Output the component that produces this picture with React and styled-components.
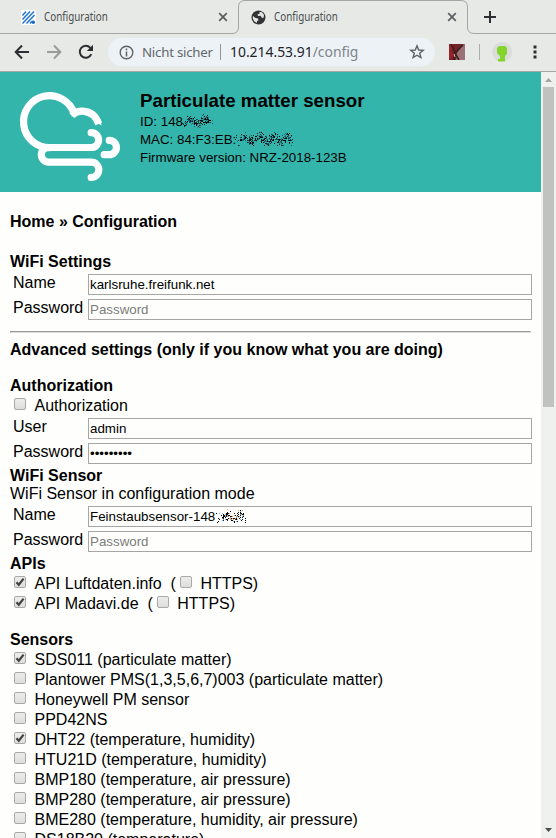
import React from 'react';
import styled, { createGlobalStyle } from 'styled-components';

const Global = createGlobalStyle`
  * { box-sizing: border-box; }
  html, body { margin: 0; height: 100%; overflow: hidden; background: #fefffc; }
`;

const Window = styled.div`
  width: 556px;
  height: 838px;
  display: flex;
  flex-direction: column;
  overflow: hidden;
  background: #fefffc;
  font-family: "Liberation Sans", Arial, sans-serif;
  font-size: 16px;
  line-height: 18px;
  color: #000;
`;

const TabStrip = styled.div`
  height: 34px;
  flex: none;
  display: flex;
  background: #e7e9e6;
  font-family: "Noto Sans", sans-serif;
  font-size: 12px;
  color: #4b4f50;
`;

const Tab = styled.div`
  position: relative;
  width: ${(p) => p.$width}px;
  height: 34px;
  padding: 0 0 0 ${(p) => p.$inset}px;
  display: flex;
  align-items: center;
  flex: none;
`;

const TabEdge = styled.svg`
  position: absolute;
  left: 0;
  top: 0;
`;

const TabTitle = styled.span`
  width: ${(p) => p.$width}px;
  margin-left: 8px;
  white-space: nowrap;
  span {
    display: inline-block;
    transform: scaleX(0.82);
    transform-origin: 0 50%;
  }
`;

const Toolbar = styled.div`
  height: 38px;
  flex: none;
  display: flex;
  align-items: center;
  padding: 0 0 1px 14px;
  background: #e7e9e6;
  border-bottom: 1px solid #a5a6a3;
`;

const Icon = styled.svg`
  flex: none;
  display: block;
  margin-left: ${(p) => p.$gap || 0}px;
`;

const AddressBar = styled.div`
  width: 327px;
  height: 28px;
  margin-left: 14px;
  padding-left: 11px;
  border-radius: 14px;
  background: #edf2f6;
  display: flex;
  align-items: center;
  font-family: "Noto Sans", sans-serif;
  font-size: 13.3px;
  color: #63676b;
  white-space: nowrap;
`;

const Security = styled.span`
  width: 79px;
  height: 16px;
  line-height: 16px;
  margin-left: 8px;
  border-right: 1px solid #8f9496;
  letter-spacing: -0.25px;
`;

const Url = styled.span`
  width: 179px;
  margin-left: 9px;
  color: #202427;
  font-size: 13.9px;
  i { font-style: normal; color: #808589; }
`;

const Divider = styled.div`
  width: 1px;
  height: 16px;
  margin-left: 14px;
  background: #acaeab;
`;

const Avatar = styled.div`
  width: 20px;
  height: 20px;
  margin-left: 12px;
  border-radius: 50%;
  background: #d9dcda;
`;

const Viewport = styled.div`
  flex: 1;
  min-height: 0;
  display: flex;
`;

const Page = styled.main`
  flex: 1;
  min-width: 0;
  overflow: hidden;
`;

const Banner = styled.header`
  height: 120px;
  display: flex;
  background: #34b5ac;
`;

const BannerText = styled.div`
  padding-top: 19px;
  margin-left: 18px;
  font-size: 13.33px;
  white-space: nowrap;
`;

const BannerTitle = styled.h3`
  margin: 0 0 2px;
  font-size: 18.72px;
  line-height: 20px;
`;

const Content = styled.div`
  padding: 21px 9px 0 10px;
  white-space: nowrap;
`;

const Heading = styled.h4`
  margin: 0;
  padding: ${(p) => p.$before || 0}px 0 ${(p) => p.$after || 0}px;
  font-size: 16px;
  font-weight: bold;
`;

const Rule = styled.hr`
  height: 2px;
  margin: 8px 1px 8px 0;
  border: 1px solid #dcdddb;
  border-top-color: #999a98;
  border-left-color: #999a98;
`;

const Fields = styled.div`
  display: grid;
  grid-template-columns: 75px 444px;
  row-gap: 4px;
  padding: 3px 0 3px 3px;
`;

const Label = styled.label`
  height: 21px;
`;

const InputBox = styled.div`
  position: relative;
  height: 21px;
`;

const Input = styled.input`
  display: block;
  width: 444px;
  height: 21px;
  padding: 1px;
  border: 1px solid #a6a7a5;
  border-radius: 0;
  outline: none;
  background: #fefffc;
  color: #000;
  font: 13.33px "Liberation Sans", Arial, sans-serif;
  &::placeholder { color: #7b7c7a; opacity: 1; }
`;

const Option = styled.div`
  height: 20px;
  padding: 2px 0 0 4px;
  display: flex;
`;

const Mark = styled.svg`
  flex: none;
  display: block;
  width: 12px;
  height: 12px;
  margin: 1px 8.5px 0 ${(p) => p.$gap || 0}px;
`;

const InlineScribble = styled.svg`
  display: inline-block;
  height: 16px;
  vertical-align: top;
  margin-left: ${(p) => p.$gap || 0}px;
`;

const InputScribble = styled.svg`
  position: absolute;
  left: 128px;
  top: 2px;
`;

const ScrollBar = styled.div`
  width: 15px;
  flex: none;
  display: flex;
  flex-direction: column;
  align-items: center;
  background: #eff1ee;
`;

const ScrollThumb = styled.div`
  width: 11px;
  height: 320px;
  margin: 0 0 auto;
  background: #c0c2bf;
`;

function specks(width, seed, colors) {
  let s = seed;
  const rnd = () => {
    s = (s * 16807) % 2147483647;
    return s / 2147483647;
  };
  const out = [];
  for (let x = 0; x < width; x++) {
    const middle = 8 + 2.5 * Math.sin(x / 2.2);
    for (let y = 1; y < 15; y++) {
      const edge = Math.min(1, (x + 1) / 10, (width - x) / 5);
      const spread = Math.max(0, 1 - Math.abs(y - middle) / 7);
      if (rnd() < 0.66 * edge * spread) {
        out.push(<rect key={x + '-' + y} x={x} y={y} width="1" height="1" fill={colors[Math.floor(rnd() * colors.length)]} />);
      }
    }
  }
  return out;
}

const DARK = ['#071d1c', '#0b2827', '#1c4f78', '#247d78', '#000'];
const MIXED = ['#000', '#111', '#222', '#dfa56a', '#74bce8', '#000'];

const Close = () => (
  <Icon width="10" height="10">
    <path d="M1.2 1.2 8.8 8.8M8.8 1.2 1.2 8.8" stroke="#5a5e60" strokeWidth="1.7" />
  </Icon>
);

function Checkbox({ on, gap }) {
  return (
    <Mark $gap={gap} viewBox="0 0 12 12">
      <defs>
        <linearGradient id="face" x2="0" y2="1">
          <stop offset="0" stopColor="#ededeb" />
          <stop offset="1" stopColor="#dddedc" />
        </linearGradient>
      </defs>
      <rect x=".5" y=".5" width="11" height="11" rx="1.5" fill="url(#face)" stroke="#a9aaa8" />
      {on && <path d="M2.5 6.2 4.8 8.7 9.6 2.6" fill="none" stroke="#424341" strokeWidth="2.2" />}
    </Mark>
  );
}

function Field({ label, value, placeholder, type = 'text', scribble }) {
  return (
    <>
      <Label>{label}</Label>
      <InputBox>
        <Input type={type} defaultValue={value} placeholder={placeholder} />
        {scribble && (
          <InputScribble width="31" height="17" shapeRendering="crispEdges">{specks(30, 77, MIXED)}</InputScribble>
        )}
      </InputBox>
    </>
  );
}

const sensors = [
  ['SDS011 (particulate matter)', true],
  ['Plantower PMS(1,3,5,6,7)003 (particulate matter)'],
  ['Honeywell PM sensor'],
  ['PPD42NS'],
  ['DHT22 (temperature, humidity)', true],
  ['HTU21D (temperature, humidity)'],
  ['BMP180 (temperature, air pressure)'],
  ['BMP280 (temperature, air pressure)'],
  ['BME280 (temperature, humidity, air pressure)'],
  ['DS18B20 (temperature)'],
];

const apis = ['API Luftdaten.info', 'API Madavi.de'];

export default function App() {
  return (
    <Window>
      <Global />
      <TabStrip>
        <Tab $width={238} $inset={21}>
          <TabEdge width="238" height="34">
            <path d="M0 33.5H232Q238.5 33.5 238.5 27" fill="none" stroke="#a5a6a3" />
          </TabEdge>
          <Icon width="15" height="15" viewBox="0 0 15 15">
            <rect width="15" height="15" rx="2" fill="#fbfcfc" />
            <path d="M1.5 5.5 5 1.5M1.5 9.5 9 1.5M1.5 13.5 13 1.5M5.5 13.5 13.5 5M9 13.5 11 11.2" stroke="#2376cf" strokeWidth="1.5" />
            <circle cx="12.3" cy="12.2" r="1.7" fill="#1469c4" />
          </Icon>
          <TabTitle $width={174}><span>Configuration</span></TabTitle>
          <Close />
        </Tab>
        <Tab $width={318} $inset={13}>
          <TabEdge width="318" height="34">
            <path d="M.5 28V7Q.5.5 7 .5H223Q229.500 .5 229.500 7V27Q229.500 33.500 236 33.500H318" fill="none" stroke="#a5a6a3" />
            <path d="M-6 33.500Q.5 33.500 .5 27" fill="none" stroke="#a5a6a3" />
          </TabEdge>
          <Icon width="15" height="15" viewBox="0 0 15 15">
            <circle cx="7.500" cy="7.500" r="7" fill="#303435" />
            <path d="M8.500 2 11 2.300 13 5 12.500 8 10.500 7.500 9.800 5.800 7 6 6.500 4.500 8.500 3.800ZM2 6 4.500 8 7 8.500 7.500 10.300 6 11 5.800 13 3 11 1.700 8Z" fill="#e7e9e6" />
          </Icon>
          <TabTitle $width={173}><span>Configuration</span></TabTitle>
          <Close />
          <Icon $gap={27} width="12" height="12">
            <path d="M6 0V12M0 6H12" stroke="#2c2f31" strokeWidth="2" />
          </Icon>
        </Tab>
      </TabStrip>
      <Toolbar>
        <Icon width="16" height="16" viewBox="0 0 16 16">
          <path d="M15 8H2M8 1.500 1.700 8 8 14.500" fill="none" stroke="#2c2f31" strokeWidth="2" />
        </Icon>
        <Icon $gap={16} width="16" height="16" viewBox="0 0 16 16">
          <path d="M1 8H14M8 1.500 14.300 8 8 14.500" fill="none" stroke="#999c9b" strokeWidth="2" />
        </Icon>
        <Icon $gap={16} width="16" height="16" viewBox="0 0 16 16">
          <path d="M13.300 10.200A6 6 0 1 1 12.300 3.800L13.500 5" fill="none" stroke="#2c2f31" strokeWidth="2" />
          <path d="M15 .8V7H8.800Z" fill="#2c2f31" />
        </Icon>
        <AddressBar>
          <Icon width="15" height="15">
            <circle cx="7.500" cy="7.500" r="6.300" fill="none" stroke="#5f6366" strokeWidth="1.400" />
            <path d="M7.500 3.500V5.200M7.500 6.500V11.500" stroke="#5f6366" strokeWidth="1.500" />
          </Icon>
          <Security>Nicht sicher</Security>
          <Url>10.214.53.91<i>/config</i></Url>
          <Icon width="16" height="16" viewBox="0 0 16 16">
            <path d="M8 1.800 9.700 6 14.200 6.300 10.700 9.200 11.900 13.600 8 11.200 4.100 13.600 5.300 9.200 1.800 6.300 6.300 6Z" fill="none" stroke="#5f6366" strokeWidth="1.400" />
          </Icon>
        </AddressBar>
        <Icon $gap={14} width="16" height="16">
          <rect width="16" height="16" fill="#762224" />
          <path d="M0 0H5L2 7 5 12 0 16Z" fill="#98242a" />
          <path d="M13 1 16 0V16H7L8 9Z" fill="#997176" />
          <path d="M2 0 6 8 5 16M6 9 14 1M7 11 10 16" fill="none" stroke="#342021" strokeWidth="1.600" />
          <path d="M5 10 6 13" stroke="#dab8b8" />
        </Icon>
        <Divider />
        <Avatar>
          <svg width="20" height="20">
            <path d="M7 4H13L15 6V12L13 14V19.500H6V17H8V14L5 11V6Z" fill="#83d52b" />
          </svg>
        </Avatar>
        <Icon $gap={21} width="4" height="14">
          <path d="M.5 .5h3v3h-3zM.5 5.500h3v3h-3zM.5 10.500h3v3h-3z" fill="#2c2f31" />
        </Icon>
      </Toolbar>
      <Viewport>
        <Page>
          <Banner>
            <svg width="122" height="120" viewBox="-0.7 72 122 120" fill="none" stroke="#fff" strokeWidth="7.200" strokeLinecap="round">
              <path d="M49.500 147.700A26 26 0 1 1 73.500 113.500" strokeLinecap="butt" />
              <path d="M71 115.500Q76 110.800 82 111.200Q94 112 98 124" strokeLinecap="butt" />
              <path d="M70.300 109 73 105.800 76 110 71.200 117Z M94 121.500 98 116 101 125.500Z" fill="#fff" stroke="none" />
              <path d="M90.500 132.700A7.400 7.400 0 0 1 90.500 147.500H48A7.300 7.300 0 0 0 48 162.200H90.500A7.600 7.600 0 0 1 90.500 177.400" />
              <path d="M108.500 140.300A7.200 7.200 0 0 1 108.500 154.700H103.500" />
            </svg>
            <BannerText>
              <BannerTitle>Particulate matter sensor</BannerTitle>
              <div>ID: 148<InlineScribble $gap={-3} width="34" shapeRendering="crispEdges">{specks(33, 91, DARK)}</InlineScribble></div>
              <div>MAC: 84:F3:EB:<InlineScribble $gap={-1} width="60" shapeRendering="crispEdges">{specks(59, 2024, DARK)}</InlineScribble></div>
              <div>Firmware version: NRZ-2018-123B</div>
            </BannerText>
          </Banner>
          <Content>
            <Heading $after={22}>Home » Configuration</Heading>
            <Heading>WiFi Settings</Heading>
            <Fields>
              <Field label="Name" value="karlsruhe.freifunk.net" />
              <Field label="Password" placeholder="Password" />
            </Fields>
            <Rule />
            <Heading $after={18}>Advanced settings (only if you know what you are doing)</Heading>
            <Heading>Authorization</Heading>
            <Option><Checkbox />Authorization</Option>
            <Fields>
              <Field label="User" value="admin" />
              <Field label="Password" type="password" value="feinstaub" />
            </Fields>
            <Heading>WiFi Sensor</Heading>
            <div>WiFi Sensor in configuration mode</div>
            <Fields>
              <Field label="Name" value="Feinstaubsensor-148" scribble />
              <Field label="Password" placeholder="Password" />
            </Fields>
            <Heading>APIs</Heading>
            {apis.map((name) => (
              <Option key={name}>
                <Checkbox on />{name}&nbsp;&nbsp;(<Checkbox gap={4} />HTTPS)
              </Option>
            ))}
            <Heading $before={18}>Sensors</Heading>
            {sensors.map(([name, on]) => (
              <Option key={name}><Checkbox on={on} />{name}</Option>
            ))}
          </Content>
        </Page>
        <ScrollBar>
          <Icon width="15" height="15"><path d="M4 10H11L7.500 6Z" fill="#a3a5a2" /></Icon>
          <ScrollThumb />
          <Icon width="15" height="15"><path d="M4 5H11L7.500 9Z" fill="#4b4d4a" /></Icon>
        </ScrollBar>
      </Viewport>
    </Window>
  );
}
